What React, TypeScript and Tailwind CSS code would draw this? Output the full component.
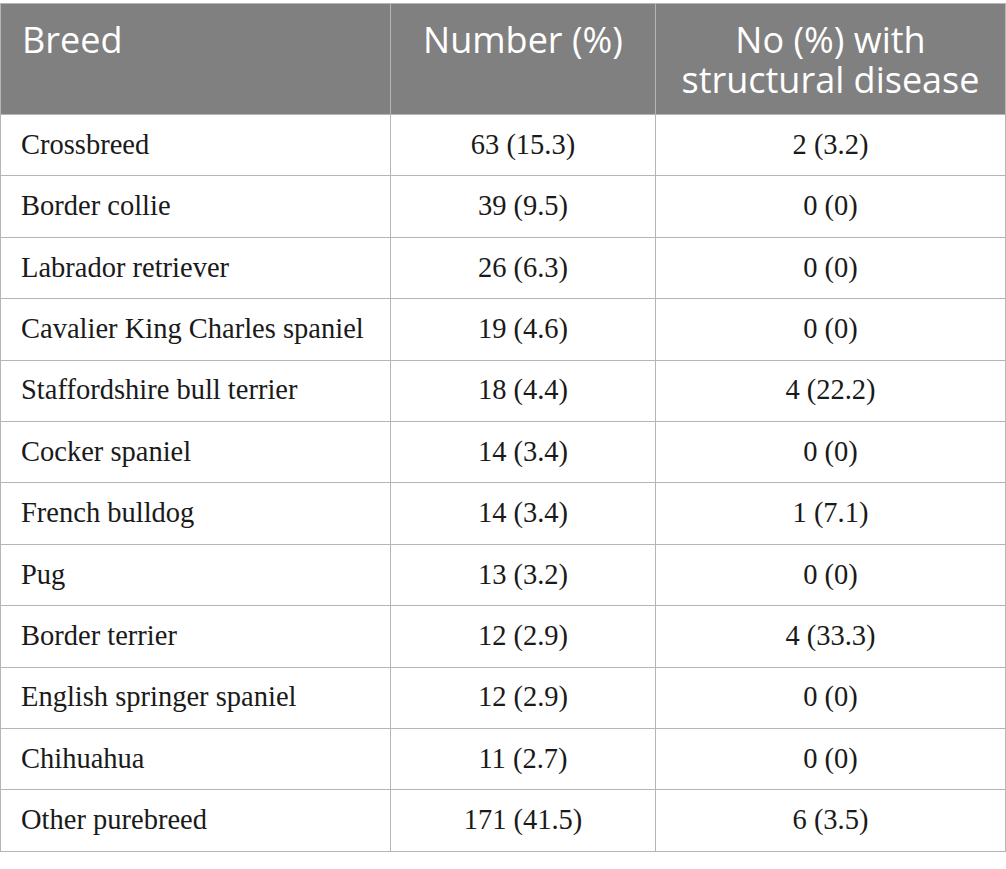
import React from "react";

const rows: [string, string, string][] = [
  ["Crossbreed", "63 (15.3)", "2 (3.2)"],
  ["Border collie", "39 (9.5)", "0 (0)"],
  ["Labrador retriever", "26 (6.3)", "0 (0)"],
  ["Cavalier King Charles spaniel", "19 (4.6)", "0 (0)"],
  ["Staffordshire bull terrier", "18 (4.4)", "4 (22.2)"],
  ["Cocker spaniel", "14 (3.4)", "0 (0)"],
  ["French bulldog", "14 (3.4)", "1 (7.1)"],
  ["Pug", "13 (3.2)", "0 (0)"],
  ["Border terrier", "12 (2.9)", "4 (33.3)"],
  ["English springer spaniel", "12 (2.9)", "0 (0)"],
  ["Chihuahua", "11 (2.7)", "0 (0)"],
  ["Other purebreed", "171 (41.5)", "6 (3.5)"],
];

export default function App() {
  return (
    <div className="w-[1006px] h-[869px] bg-white pt-[3px]">
      <table className="table-fixed border-collapse w-[1005px]">
        <colgroup>
          <col className="w-[390px]" />
          <col className="w-[265px]" />
          <col className="w-[350px]" />
        </colgroup>
        <thead>
          <tr className="h-[111px] bg-[#808080] text-white font-['Open_Sans',sans-serif] text-[36px] leading-[40px]">
            <th className="border border-[#b5b5b5] align-top text-left font-normal pl-[21px] pt-[16px]">Breed</th>
            <th className="border border-[#b5b5b5] align-top text-center font-normal pt-[16px]">Number (%)</th>
            <th className="border border-[#b5b5b5] align-top text-center font-normal pt-[16px]">
              No (%) with
              <br />
              structural disease
            </th>
          </tr>
        </thead>
        <tbody className="font-['Liberation_Serif',serif] text-[28.5px] text-[#1a1a1a]">
          {rows.map((r, i) => (
            <tr key={i} className="h-[61.4px]">
              <td className="border border-[#b5b5b5] pl-[20px] align-middle">{r[0]}</td>
              <td className="border border-[#b5b5b5] text-center align-middle">{r[1]}</td>
              <td className="border border-[#b5b5b5] text-center align-middle">{r[2]}</td>
            </tr>
          ))}
        </tbody>
      </table>
    </div>
  );
}
